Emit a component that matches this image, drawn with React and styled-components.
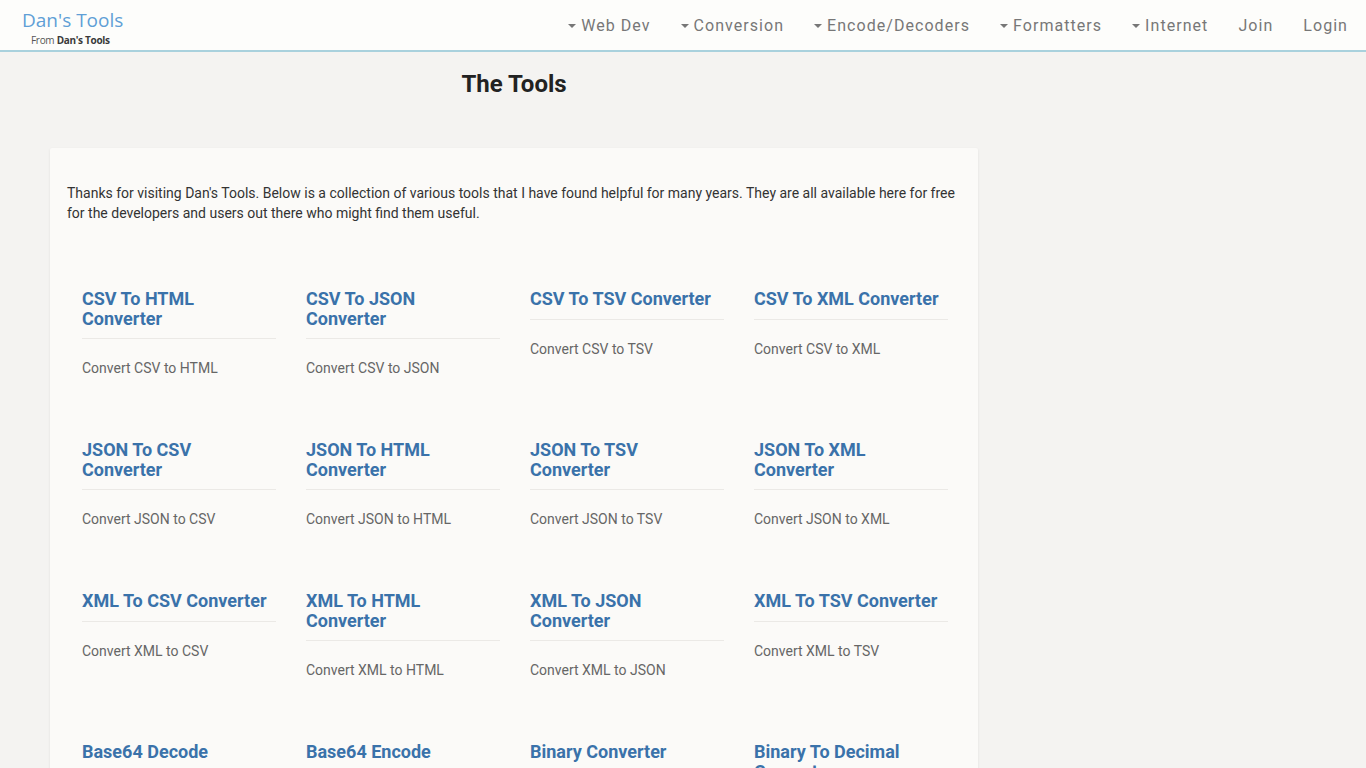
import styled, { createGlobalStyle } from "styled-components";

const GlobalStyle = createGlobalStyle`
    html, body {
        margin: 0;
        padding: 0;
        background-color: #f4f3f1;
        font-family: Roboto, "Liberation Sans", sans-serif;
    }
    ::-webkit-scrollbar {
        width: 4px;
    }
    ::-webkit-scrollbar-track {
        background: #f4f3f1;
    }
    ::-webkit-scrollbar-thumb {
        background: #c2c2c2;
    }
`

const Header = styled.header`
    display: flex;
    justify-content: space-between;
    align-items: flex-start;
    height: 50px;
    background-color: #fdfdfb;
    border-bottom: 2px solid #a9d1dd;
`
const Brand = styled.a`
    display: flex;
    flex-direction: column;
    padding: 9px 0 0 22px;
    text-decoration: none;
`
const BrandName = styled.span`
    font-family: "Open Sans", "Liberation Sans", sans-serif;
    font-size: 19px;
    line-height: 22px;
    color: #5f9fd6;
`
const BrandFrom = styled.span`
    padding-left: 9px;
    margin-top: 2px;
    font-family: "Open Sans", "Liberation Sans", sans-serif;
    font-size: 10px;
    letter-spacing: -0.3px;
    color: #555;

    b {
        color: #3a3a3a;
    }
`
const Nav = styled.nav`
    display: flex;
    padding-right: 3px;
`
const NavItem = styled.a`
    display: flex;
    align-items: center;
    padding: 16px 15px 14px;
    font-size: 16px;
    line-height: 20px;
    letter-spacing: 1.05px;
    color: #777;
    text-decoration: none;
`
const Caret = styled.span`
    display: inline-block;
    width: 0;
    height: 0;
    margin-right: 5px;
    border-top: 4px solid #777;
    border-left: 4px solid transparent;
    border-right: 4px solid transparent;
`

const Page = styled.div`
    display: flex;
    padding: 0 50px 40px;
`
const Main = styled.main`
    width: 928px;
`
const Title = styled.h1`
    margin: 18px 0 50px;
    text-align: center;
    font-size: 24px;
    line-height: 28px;
    font-weight: 700;
    color: #222;
`
const Card = styled.section`
    padding: 35px 15px 40px 17px;
    background-color: #fbfaf8;
    border-radius: 2px;
    box-shadow: 0 1px 3px rgba(0, 0, 0, 0.08);
`
const Intro = styled.p`
    margin: 0 0 66px;
    font-size: 14px;
    line-height: 20px;
    color: #333;
`
const Grid = styled.div`
    display: grid;
    grid-template-columns: repeat(4, 224px);
    row-gap: 62px;
    align-items: start;
`
const Tool = styled.a`
    display: flex;
    flex-direction: column;
    padding: 0 15px;
    text-decoration: none;
`
const ToolName = styled.h3`
    margin: 0;
    padding: 0 5px 10px 0;
    border-bottom: 1px solid #ebe9e6;
    font-size: 18px;
    line-height: 19.5px;
    font-weight: 700;
    color: #3a72aa;
`
const ToolDesc = styled.p`
    margin: 19px 0 0;
    font-size: 14px;
    line-height: 20px;
    color: #666;
`

const menus = ["Web Dev", "Conversion", "Encode/Decoders", "Formatters", "Internet"];

const tools = [
    ["CSV To HTML Converter", "Convert CSV to HTML"],
    ["CSV To JSON Converter", "Convert CSV to JSON"],
    ["CSV To TSV Converter", "Convert CSV to TSV"],
    ["CSV To XML Converter", "Convert CSV to XML"],
    ["JSON To CSV Converter", "Convert JSON to CSV"],
    ["JSON To HTML Converter", "Convert JSON to HTML"],
    ["JSON To TSV Converter", "Convert JSON to TSV"],
    ["JSON To XML Converter", "Convert JSON to XML"],
    ["XML To CSV Converter", "Convert XML to CSV"],
    ["XML To HTML Converter", "Convert XML to HTML"],
    ["XML To JSON Converter", "Convert XML to JSON"],
    ["XML To TSV Converter", "Convert XML to TSV"],
    ["Base64 Decode", "Decode Base64 text"],
    ["Base64 Encode", "Encode text to Base64"],
    ["Binary Converter", "Convert text to binary"],
    ["Binary To Decimal Converter", "Convert binary to decimal"],
    ["Decimal To Binary Converter", "Convert decimal to binary"],
    ["Hex To Decimal Converter", "Convert hex to decimal"],
    ["Decimal To Hex Converter", "Convert decimal to hex"],
    ["URL Decode", "Decode a URL"],
    ["URL Encode", "Encode a URL"],
    ["HTML Entities Decode", "Decode HTML entities"],
    ["HTML Entities Encode", "Encode HTML entities"],
    ["JWT Decoder", "Decode a JSON Web Token"],
    ["CSS Formatter", "Format CSS code"],
    ["HTML Formatter", "Format HTML code"],
    ["JavaScript Formatter", "Format JavaScript code"],
    ["JSON Formatter", "Format JSON data"],
    ["SQL Formatter", "Format SQL queries"],
    ["XML Formatter", "Format XML data"],
    ["CSS Minifier", "Minify CSS code"],
    ["JavaScript Minifier", "Minify JavaScript code"],
    ["What Is My IP", "Show your IP address"],
    ["DNS Lookup", "Look up DNS records"],
    ["Whois Lookup", "Look up domain owners"],
    ["Ping Test", "Ping a host"],
];

export default function App()
{
    return <>
        <GlobalStyle/>
        <Header>
            <Brand href="#">
                <BrandName>Dan's Tools</BrandName>
                <BrandFrom>From <b>Dan's Tools</b></BrandFrom>
            </Brand>
            <Nav>
                {menus.map((m) => (
                    <NavItem key={m} href="#">
                        <Caret/>{m}
                    </NavItem>
                ))}
                <NavItem href="#">Join</NavItem>
                <NavItem href="#">Login</NavItem>
            </Nav>
        </Header>

        <Page>
            <Main>
                <Title>The Tools</Title>
                <Card>
                    <Intro>
                        Thanks for visiting Dan's Tools. Below is a collection of various tools that I have found helpful for many years. They are all available here for free for the developers and users out there who might find them useful.
                    </Intro>
                    <Grid>
                        {tools.map(([name, desc]) => (
                            <Tool key={name} href="#">
                                <ToolName>{name}</ToolName>
                                <ToolDesc>{desc}</ToolDesc>
                            </Tool>
                        ))}
                    </Grid>
                </Card>
            </Main>
        </Page>
    </>
}
